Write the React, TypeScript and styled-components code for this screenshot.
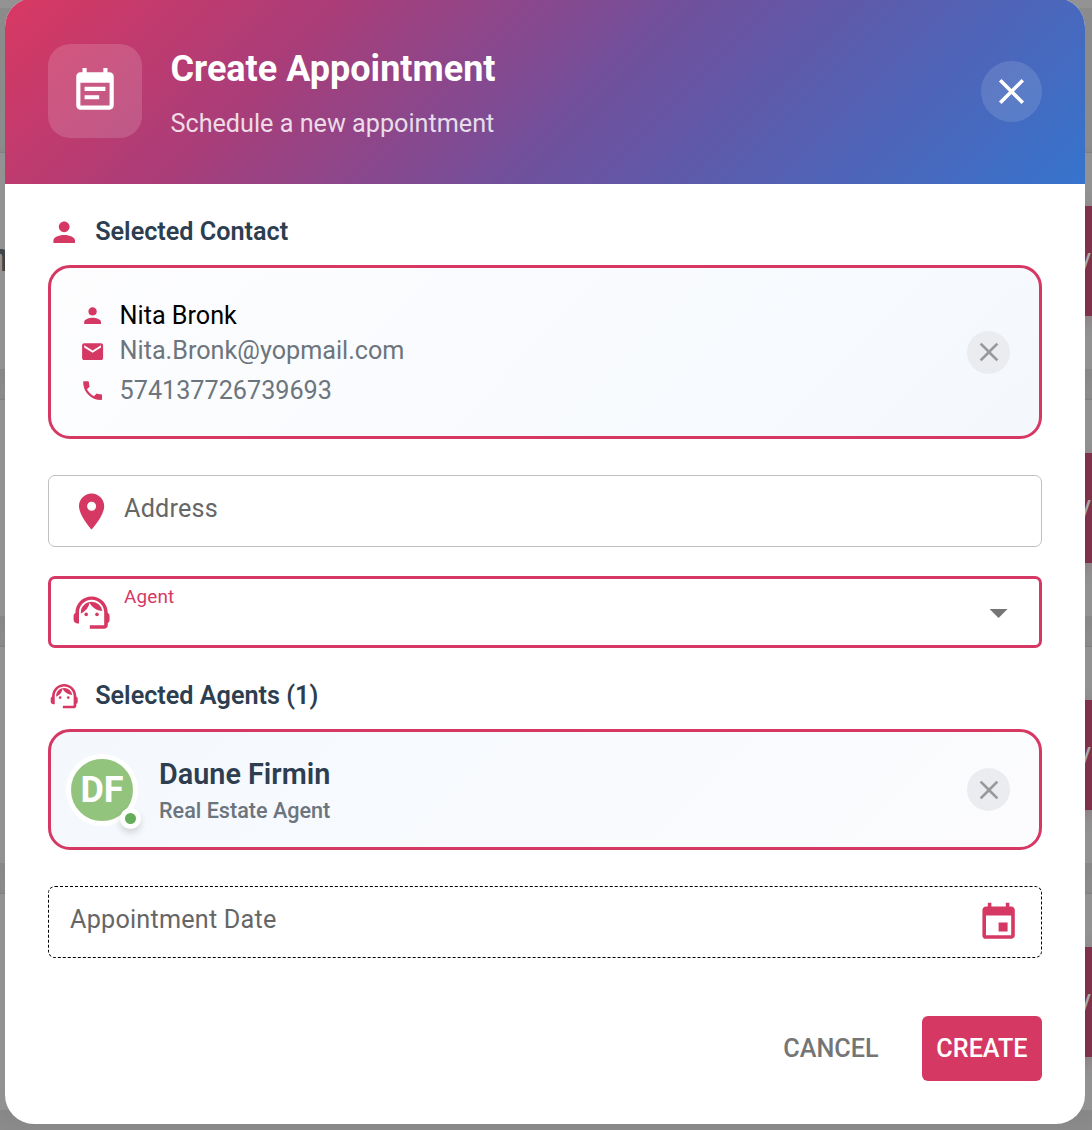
import React from "react";
import styled, { createGlobalStyle } from "styled-components";
import {
  MdArrowDropDown,
  MdClose,
  MdEmail,
  MdEvent,
  MdEventNote,
  MdLocationOn,
  MdPerson,
  MdPhone,
  MdSupportAgent,
} from "react-icons/md";

const accent = "#d63864";

const GlobalStyle = createGlobalStyle`
  *, *::before, *::after { box-sizing: border-box; }
  body { margin: 0; background: #8b8b8b; font-family: Roboto, "Liberation Sans", sans-serif; }
  button { font-family: inherit; border: 0; padding: 0; cursor: pointer; }
  svg { display: block; flex: none; }
`;

const Screen = styled.main`
  display: grid;
  width: 1092px;
  height: 1130px;
  overflow: hidden;
  & > * { grid-area: 1 / 1; }
`;

const Backdrop = styled.div`
  display: flex;
  flex-direction: column;
  gap: 31px;
  height: 1130px;
  padding-top: 153px;
  overflow: hidden;
  background: linear-gradient(#939393 0 8px, #8b8b8b 8px);
`;

const ListCard = styled.div`
  display: flex;
  flex: none;
  justify-content: space-between;
  align-items: flex-start;
  height: 216px;
  padding-top: 53px;
  background: #929292;
  box-shadow: 0 -1px 1px rgba(0, 0, 0, 0.06), 0 6px 20px rgba(0, 0, 0, 0.06);
`;

const ListName = styled.span`
  display: flex;
  justify-content: flex-end;
  width: 10px;
  margin-top: 30px;
  font-size: 40px;
  font-weight: 700;
  line-height: 44px;
  color: #3f4449;
`;

const ListAction = styled.span`
  display: flex;
  justify-content: flex-end;
  align-items: center;
  width: 60px;
  height: 110px;
  padding: 5px 1px 0 0;
  background: #7f304b;
  box-shadow: 0 4px 16px rgba(127, 48, 75, 0.3);
  color: #a9a9a9;
  font-size: 25.2px;
`;

const Dialog = styled.section`
  display: flex;
  flex-direction: column;
  width: 1080px;
  height: 1126px;
  margin: -2px 0 0 5px;
  border-radius: 29px;
  overflow: hidden;
  background: #fff;
  z-index: 1;
`;

const Header = styled.header`
  display: flex;
  flex: none;
  align-items: center;
  height: 186px;
  padding: 0 43px;
  background: linear-gradient(135deg, #d93862 0%, #a93d79 27%, #6d519e 56%, #3674cd 100%);
  color: #fff;
`;

const HeaderIcon = styled.div`
  display: grid;
  place-items: center;
  width: 94px;
  height: 94px;
  margin-right: 28.5px;
  border-radius: 22px;
  background: rgba(255, 255, 255, 0.15);
`;

const Heading = styled.div`
  flex: 1;
`;

const Title = styled.h1`
  margin: 0;
  font-size: 36px;
  font-weight: 700;
  line-height: 57px;
`;

const Subtitle = styled.p`
  margin: 8px 0 0;
  font-size: 25.2px;
  line-height: 36px;
  color: rgba(255, 255, 255, 0.83);
`;

const CloseButton = styled.button<{ $size: number; $tone: string; $fill: string }>`
  display: grid;
  place-items: center;
  flex: none;
  width: ${(p) => p.$size}px;
  height: ${(p) => p.$size}px;
  border-radius: 50%;
  background: ${(p) => p.$fill};
  color: ${(p) => p.$tone};
`;

const Body = styled.div`
  display: flex;
  flex-direction: column;
  padding: 29px 43px 0;
`;

const SectionTitle = styled.h2`
  display: flex;
  align-items: center;
  gap: 14.8px;
  height: 38px;
  margin: 0 0 14px;
  font-size: 25.2px;
  font-weight: 600;
  color: #2d3e50;
  svg { color: ${accent}; }
  span { padding-bottom: 2px; }
`;

const Card = styled.div<{ $height: number; $start: string; $end: string; $inset: number }>`
  display: flex;
  align-items: center;
  height: ${(p) => p.$height}px;
  padding: 0 29px 0 ${(p) => p.$inset}px;
  border: 3px solid ${accent};
  border-radius: 22px;
  background: linear-gradient(135deg, ${(p) => p.$start}, ${(p) => p.$end});
`;

const ContactLines = styled.div`
  display: flex;
  flex: 1;
  flex-direction: column;
  padding-top: 6px;
`;

const ContactLine = styled.div<{ $height: number; $primary?: boolean }>`
  display: flex;
  align-items: center;
  gap: 14.4px;
  height: ${(p) => p.$height}px;
  font-size: 25.2px;
  color: ${(p) => (p.$primary ? "#000" : "#6c757d")};
  svg { color: ${accent}; }
  span { padding-bottom: ${(p) => (p.$primary ? 0 : 2)}px; }
`;

const Field = styled.div<{ $variant: "plain" | "focused" | "dashed" }>`
  display: flex;
  align-items: center;
  height: 72px;
  border: ${(p) =>
    p.$variant === "plain"
      ? "1px solid #c0c0c0"
      : p.$variant === "focused"
        ? `3px solid ${accent}`
        : "1px dashed #000"};
  border-radius: 7px;
  padding: 1px ${(p) => (p.$variant === "focused" ? 19 : 21)}px 0;
  color: ${accent};
`;

const FieldLabel = styled.label<{ $floating?: boolean }>`
  flex: 1;
  margin-top: ${(p) => (p.$floating ? "-33px" : "-6px")};
  font-size: ${(p) => (p.$floating ? 18.9 : 25.2)}px;
  letter-spacing: ${(p) => (p.$floating ? 0.18 : 0.22)}px;
  color: ${(p) => (p.$floating ? accent : "#666")};
`;

const LeadIcon = styled.span`
  display: grid;
  place-items: center;
  width: 43px;
  margin-right: 11px;
`;

const Avatar = styled.div`
  position: relative;
  display: grid;
  place-items: center;
  width: 72px;
  height: 72px;
  margin-right: 21px;
  border: 5px solid #fff;
  border-radius: 50%;
  background: #93c47d;
  color: #fff;
  font-size: 36px;
  font-weight: 700;
`;

const StatusDot = styled.span`
  position: absolute;
  right: -8px;
  bottom: -8px;
  width: 21px;
  height: 21px;
  border: 5px solid #fff;
  border-radius: 50%;
  background: #66ad5b;
  box-shadow: 0 4px 7px rgba(0, 0, 0, 0.15);
`;

const AgentInfo = styled.div`
  flex: 1;
  padding-top: 2px;
`;

const AgentName = styled.div`
  font-size: 28.8px;
  font-weight: 600;
  line-height: 38px;
  color: #2d3e50;
`;

const AgentRole = styled.div`
  margin-top: 2px;
  font-size: 21.6px;
  font-weight: 500;
  line-height: 32px;
  color: #6c757d;
`;

const Gap = styled.div<{ $size: number }>`
  height: ${(p) => p.$size}px;
`;

const Actions = styled.footer`
  display: flex;
  justify-content: flex-end;
  gap: 29px;
  margin-top: 58px;
`;

const ActionButton = styled.button<{ $primary?: boolean }>`
  height: 65px;
  padding: 0 14.4px;
  border-radius: 6px;
  background: ${(p) => (p.$primary ? accent : "transparent")};
  color: ${(p) => (p.$primary ? "#fff" : "#757575")};
  font-size: 25.2px;
  font-weight: 500;
  line-height: 65px;
`;

const rows = ["n", "", "", ""];

export default function App() {
  return (
    <>
      <GlobalStyle />
      <Screen>
        <Backdrop aria-hidden="true">
          {rows.map((name, i) => (
            <ListCard key={i}>
              <ListName>{name}</ListName>
              <ListAction>V</ListAction>
            </ListCard>
          ))}
        </Backdrop>
        <Dialog role="dialog" aria-label="Create Appointment">
          <Header>
            <HeaderIcon>
              <MdEventNote size={50} />
            </HeaderIcon>
            <Heading>
              <Title>Create Appointment</Title>
              <Subtitle>Schedule a new appointment</Subtitle>
            </Heading>
            <CloseButton $size={61} $tone="#fff" $fill="rgba(255,255,255,0.12)" aria-label="Close">
              <MdClose size={43} />
            </CloseButton>
          </Header>
          <Body>
            <SectionTitle>
              <MdPerson size={32.4} />
              <span>Selected Contact</span>
            </SectionTitle>
            <Card $height={174} $start="#fdfdfe" $end="#f4f8fd" $inset={29}>
              <ContactLines>
                <ContactLine $height={36} $primary>
                  <MdPerson size={25.2} />
                  <span>Nita Bronk</span>
                </ContactLine>
                <ContactLine $height={36}>
                  <MdEmail size={25.2} />
                  <span>Nita.Bronk@yopmail.com</span>
                </ContactLine>
                <ContactLine $height={43}>
                  <MdPhone size={25.2} />
                  <span>574137726739693</span>
                </ContactLine>
              </ContactLines>
              <CloseButton $size={43} $tone="#999" $fill="#ebecf0" aria-label="Remove contact">
                <MdClose size={32} />
              </CloseButton>
            </Card>
            <Gap $size={36} />
            <Field $variant="plain">
              <LeadIcon>
                <MdLocationOn size={43.2} />
              </LeadIcon>
              <FieldLabel>Address</FieldLabel>
            </Field>
            <Gap $size={29} />
            <Field $variant="focused">
              <LeadIcon>
                <MdSupportAgent size={43.2} />
              </LeadIcon>
              <FieldLabel $floating>Agent</FieldLabel>
              <MdArrowDropDown size={43.2} color="#757575" />
            </Field>
            <Gap $size={29} />
            <SectionTitle>
              <MdSupportAgent size={32.4} />
              <span>Selected Agents (1)</span>
            </SectionTitle>
            <Card $height={121} $start="#f4f8fd" $end="#fcfcfe" $inset={15}>
              <Avatar>
                DF
                <StatusDot />
              </Avatar>
              <AgentInfo>
                <AgentName>Daune Firmin</AgentName>
                <AgentRole>Real Estate Agent</AgentRole>
              </AgentInfo>
              <CloseButton $size={43} $tone="#999" $fill="#ebecf0" aria-label="Remove agent">
                <MdClose size={32} />
              </CloseButton>
            </Card>
            <Gap $size={36} />
            <Field $variant="dashed">
              <FieldLabel>Appointment Date</FieldLabel>
              <MdEvent size={43.2} />
            </Field>
            <Actions>
              <ActionButton>CANCEL</ActionButton>
              <ActionButton $primary>CREATE</ActionButton>
            </Actions>
          </Body>
        </Dialog>
      </Screen>
    </>
  );
}
